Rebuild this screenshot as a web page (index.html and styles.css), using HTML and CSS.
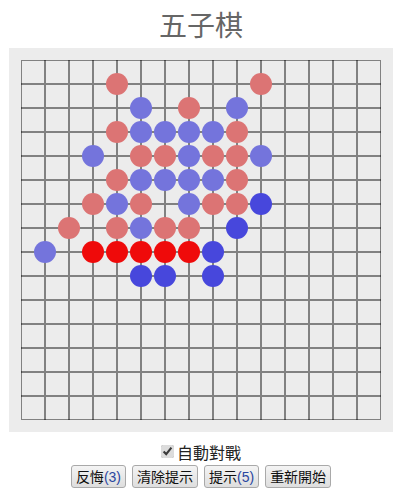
FILE: index.html
```html
<!DOCTYPE html>
<html lang="zh-Hant">
<head>
  <meta charset="UTF-8">
  <title>五子棋</title>
  <link rel="stylesheet" href="styles.css">
</head>
<body>
  <h1 class="title">五子棋</h1>

  <div class="board">
    <svg width="384" height="384" viewBox="0 0 384 384">
      <g class="grid">
        <rect x="12.5" y="12.5" width="359" height="359" class="edge"></rect>
        <path d="M36 12V372M60 12V372M84 12V372M108 12V372M132 12V372M156 12V372M180 12V372M204 12V372M228 12V372M252 12V372M276 12V372M300 12V372M324 12V372M348 12V372
                 M12 36H372M12 60H372M12 84H372M12 108H372M12 132H372M12 156H372M12 180H372M12 204H372M12 228H372M12 252H372M12 276H372M12 300H372M12 324H372M12 348H372"></path>
      </g>
      <!-- 提示 (淡色) -->
      <g class="hint-red">
        <circle cx="108" cy="36" r="11"/><circle cx="252" cy="36" r="11"/>
        <circle cx="180" cy="60" r="11"/>
        <circle cx="108" cy="84" r="11"/><circle cx="228" cy="84" r="11"/>
        <circle cx="132" cy="108" r="11"/><circle cx="156" cy="108" r="11"/><circle cx="204" cy="108" r="11"/><circle cx="228" cy="108" r="11"/>
        <circle cx="108" cy="132" r="11"/><circle cx="228" cy="132" r="11"/>
        <circle cx="84" cy="156" r="11"/><circle cx="132" cy="156" r="11"/><circle cx="204" cy="156" r="11"/><circle cx="228" cy="156" r="11"/>
        <circle cx="60" cy="180" r="11"/><circle cx="108" cy="180" r="11"/><circle cx="156" cy="180" r="11"/><circle cx="180" cy="180" r="11"/>
      </g>
      <g class="hint-blue">
        <circle cx="132" cy="60" r="11"/><circle cx="228" cy="60" r="11"/>
        <circle cx="132" cy="84" r="11"/><circle cx="156" cy="84" r="11"/><circle cx="180" cy="84" r="11"/><circle cx="204" cy="84" r="11"/>
        <circle cx="84" cy="108" r="11"/><circle cx="180" cy="108" r="11"/><circle cx="252" cy="108" r="11"/>
        <circle cx="132" cy="132" r="11"/><circle cx="156" cy="132" r="11"/><circle cx="180" cy="132" r="11"/><circle cx="204" cy="132" r="11"/>
        <circle cx="108" cy="156" r="11"/><circle cx="180" cy="156" r="11"/>
        <circle cx="132" cy="180" r="11"/>
        <circle cx="36" cy="204" r="11"/>
      </g>
      <!-- 棋子 -->
      <g class="stone-red">
        <circle cx="84" cy="204" r="11"/><circle cx="108" cy="204" r="11"/><circle cx="132" cy="204" r="11"/><circle cx="156" cy="204" r="11"/><circle cx="180" cy="204" r="11"/>
      </g>
      <g class="stone-blue">
        <circle cx="252" cy="156" r="11"/>
        <circle cx="228" cy="180" r="11"/>
        <circle cx="204" cy="204" r="11"/>
        <circle cx="132" cy="228" r="11"/><circle cx="156" cy="228" r="11"/><circle cx="204" cy="228" r="11"/>
      </g>
    </svg>
  </div>

  <div class="controls">
    <label class="auto"><input type="checkbox" checked> 自動對戰</label>
    <div class="buttons">
      <button type="button">反悔<span class="num">(3)</span></button>
      <button type="button">清除提示</button>
      <button type="button">提示<span class="num">(5)</span></button>
      <button type="button">重新開始</button>
    </div>
  </div>
</body>
</html>
```

FILE: styles.css
```css
body {
  margin: 8px 7px 8px 9px;
  font-family: "Noto Sans CJK TC", "Liberation Sans", sans-serif;
  color: #222;
}
.title {
  margin: 0 0 8px;
  height: 32px;
  line-height: 32px;
  text-align: center;
  font-size: 28px;
  font-weight: normal;
  color: #666;
}
.board {
  width: 384px;
  height: 384px;
  background-color: #ececec;
}
.board svg {
  display: block;
}
.grid path {
  stroke: rgba(0, 0, 0, 0.45);
  stroke-width: 2;
  fill: none;
}
.grid .edge {
  stroke: rgba(0, 0, 0, 0.45);
  stroke-width: 1;
  fill: none;
}
.hint-red circle { fill: #dc7474; }
.hint-blue circle { fill: #7474dc; }
.stone-red circle { fill: #ef0a0a; }
.stone-blue circle { fill: #4747dc; }

.controls {
  margin-top: 7px;
  text-align: center;
}
.auto {
  display: inline-flex;
  align-items: center;
  gap: 3px;
  font-size: 16px;
  line-height: 20px;
}
.auto input {
  margin: 0;
  width: 13px;
  height: 13px;
  accent-color: #dcdcdc;
}
.buttons {
  margin-top: 2px;
  display: flex;
  justify-content: center;
  gap: 6px;
}
.buttons button {
  font-family: "Noto Sans CJK TC", "Liberation Sans", sans-serif;
  font-size: 14px;
  line-height: 19px;
  height: 23px;
  padding: 0 4px;
  color: #111;
  background: linear-gradient(#f4f4f4, #dedede);
  border: 1px solid #a9a9a9;
  border-radius: 3px;
}
.num {
  font-family: "Liberation Sans", sans-serif;
  color: #2a46a0;
}
```
